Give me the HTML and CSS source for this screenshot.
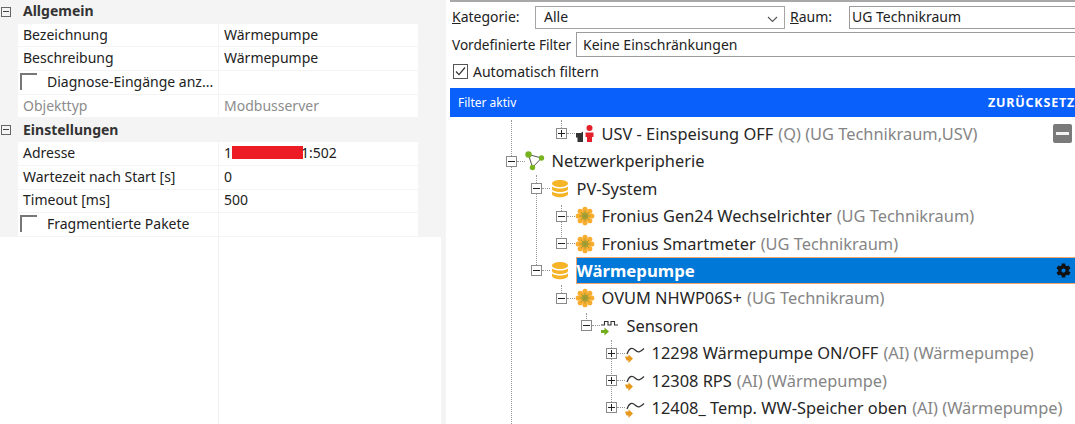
FILE: index.html
```html
<!DOCTYPE html>
<html lang="de">
<head>
<meta charset="utf-8">
<title>Wärmepumpe</title>
<link rel="stylesheet" href="styles.css">
</head>
<body>
<svg class="defs" width="0" height="0" aria-hidden="true">
  <symbol id="ic-db" viewBox="0 0 20 20">
    <path fill="#f6b426" d="M2 4.500C2 2.500 6 1 10 1s8 1.500 8 3.500S14 8 10 8 2 6.500 2 4.500z"/>
    <path fill="#f6b426" d="M2 7.500C4 9 7 9.600 10 9.600s6-.6 8-2.100V10c0 1.600-4 3-8 3s-8-1.400-8-3z"/>
    <path fill="#f6b426" d="M2 12.500C4 14 7 14.600 10 14.600s6-.6 8-2.100V15c0 1.800-4 3.200-8 3.200S2 16.800 2 15z"/>
  </symbol>
  <symbol id="ic-star" viewBox="0 0 22 22">
    <g fill="#f8ad2e">
      <circle cx="11" cy="3.500" r="2.800"/><circle cx="16.300" cy="5.700" r="2.800"/><circle cx="18.500" cy="11" r="2.800"/><circle cx="16.300" cy="16.300" r="2.800"/>
      <circle cx="11" cy="18.500" r="2.800"/><circle cx="5.700" cy="16.300" r="2.800"/><circle cx="3.500" cy="11" r="2.800"/><circle cx="5.700" cy="5.700" r="2.800"/>
      <circle cx="11" cy="11" r="6.500"/>
    </g>
    <circle cx="11" cy="11" r="3.800" fill="#b8a032"/>
    <path stroke="#8f9c35" stroke-width=".8" fill="none" d="M6.500 6.500l9 9M15.500 6.500l-9 9M11 5v12M5 11h12"/>
  </symbol>
  <symbol id="ic-sine" viewBox="0 0 20 20">
    <path fill="none" stroke="#333" stroke-width="1.200" d="M2 11c2-6 5-7 8-4s5 2.500 9-1.500"/>
    <path fill="#e8981d" d="M0 13.500h3.500V11.500L8 15.500l-4.500 4.500v-2.500H1.500z"/>
  </symbol>
</svg>
<div class="app">
  <aside class="left">
    <div class="props">
      <div class="section"><span class="sec-box"></span><span class="sec-title">Allgemein</span></div>
      <div class="prow"><div class="name">Bezeichnung</div><div class="val">Wärmepumpe</div></div>
      <div class="prow"><div class="name">Beschreibung</div><div class="val">Wärmepumpe</div></div>
      <div class="prow"><div class="name name-check"><span class="pcheck"></span>Diagnose-Eingänge anz...</div><div class="val"></div></div>
      <div class="prow muted"><div class="name">Objekttyp</div><div class="val">Modbusserver</div></div>
      <div class="section"><span class="sec-box"></span><span class="sec-title">Einstellungen</span></div>
      <div class="prow"><div class="name">Adresse</div><div class="val">1<span class="redact"></span>1:502</div></div>
      <div class="prow"><div class="name">Wartezeit nach Start [s]</div><div class="val">0</div></div>
      <div class="prow"><div class="name">Timeout [ms]</div><div class="val">500</div></div>
      <div class="prow"><div class="name name-check"><span class="pcheck"></span>Fragmentierte Pakete</div><div class="val"></div></div>
    </div>
    <div class="props-empty"><div class="empty-col"></div></div>
  </aside>
  <main class="right">
    <div class="filters">
      <div class="frow frow-1">
        <label class="lbl lbl-kat"><u>K</u>ategorie:</label>
        <div class="field field-select">Alle
          <svg class="chev" width="11" height="7" viewBox="0 0 11 7"><path d="M1 1l4.500 4.500L10 1" fill="none" stroke="#555" stroke-width="1.100"/></svg>
        </div>
        <label class="lbl lbl-raum"><u>R</u>aum:</label>
        <div class="field field-raum">UG Technikraum</div>
      </div>
      <div class="frow frow-2">
        <label class="lbl lbl-vor">Vordefinierte Filter</label>
        <div class="field field-vor">Keine Einschränkungen</div>
      </div>
      <div class="frow frow-3">
        <svg class="cb" width="15" height="15" viewBox="0 0 15 15"><rect x=".5" y=".5" width="14" height="14" fill="#fff" stroke="#555"/><path d="M3 7.500l3 3.200L12 3.500" fill="none" stroke="#333" stroke-width="1.200"/></svg>
        <span class="lbl lbl-auto">Automatisch filtern</span>
      </div>
    </div>
    <div class="banner"><span>Filter aktiv</span><b>ZURÜCKSETZ</b></div>
    <div class="tree">
      <i class="guide g-root"></i><i class="guide g-pv"></i><i class="guide g-usv"></i><i class="guide g-fro"></i><i class="guide g-ovum"></i><i class="guide g-sens"></i><i class="guide g-ai"></i>
      <div class="row d2"><span class="box plus"></span><span class="dash"></span>
        <svg class="ic" viewBox="0 0 20 20"><path fill="#333" d="M1 9h5l2-1.500V18H2.500V13.500H1z"/><circle cx="14.500" cy="4" r="3" fill="#e4202a"/><path fill="#e4202a" d="M10.500 8.500h8V13h-1.500v5h-5v-5h-1.500z"/></svg>
        <span class="t">USV - Einspeisung OFF</span><span class="g">(Q) (UG Technikraum,USV)</span>
        <span class="minus-btn"></span>
      </div>
      <div class="row d0"><span class="box"></span><span class="dash"></span>
        <svg class="ic" viewBox="0 0 20 20"><path fill="none" stroke="#555" stroke-width="1" d="M3.500 3.500L16.500 7 7.500 16.500z"/><circle cx="3.500" cy="3.500" r="3.200" fill="#78b41e"/><circle cx="16.500" cy="7" r="2.700" fill="#78b41e"/><circle cx="7.500" cy="16.500" r="2.700" fill="#78b41e"/></svg>
        <span class="t">Netzwerkperipherie</span>
      </div>
      <div class="row d1"><span class="box"></span><span class="dash"></span>
        <svg class="ic"><use href="#ic-db"/></svg>
        <span class="t">PV-System</span>
      </div>
      <div class="row d2"><span class="box"></span><span class="dash"></span>
        <svg class="ic"><use href="#ic-star"/></svg>
        <span class="t">Fronius Gen24 Wechselrichter</span><span class="g">(UG Technikraum)</span>
      </div>
      <div class="row d2"><span class="box"></span><span class="dash"></span>
        <svg class="ic"><use href="#ic-star"/></svg>
        <span class="t">Fronius Smartmeter</span><span class="g">(UG Technikraum)</span>
      </div>
      <div class="row d1"><span class="box"></span><span class="dash"></span>
        <svg class="ic"><use href="#ic-db"/></svg>
        <span class="sel"><b class="sel-t">Wärmepumpe</b>
          <svg class="gear" width="17" height="17" viewBox="0 0 24 24"><path fill="#111" d="M19.400 13a7.500 7.500 0 0 0 0-2l2.500-1.900-2.400-4.200-3 1.200a7.500 7.500 0 0 0-1.700-1l-.5-3.100H9.700l-.5 3.100a7.500 7.500 0 0 0-1.700 1l-3-1.200-2.400 4.200L4.600 11a7.500 7.500 0 0 0 0 2l-2.500 1.900 2.400 4.200 3-1.200a7.500 7.500 0 0 0 1.700 1l.5 3.100h4.600l.5-3.100a7.500 7.500 0 0 0 1.700-1l3 1.200 2.400-4.200zM12 15a3 3 0 1 1 0-6 3 3 0 0 1 0 6z"/></svg>
        </span>
      </div>
      <div class="row d2"><span class="box"></span><span class="dash"></span>
        <svg class="ic"><use href="#ic-star"/></svg>
        <span class="t">OVUM NHWP06S+</span><span class="g">(UG Technikraum)</span>
      </div>
      <div class="row d3"><span class="box"></span><span class="dash"></span>
        <svg class="ic" viewBox="0 0 20 20"><path fill="none" stroke="#333" stroke-width="1.100" d="M1 9h3.500V5.500H8V9h3V5.500h3.500V9H18"/><path fill="#72ad1c" d="M1 14h3.500V11.500L9 15.500 4.500 19.500V17H1z"/></svg>
        <span class="t">Sensoren</span>
      </div>
      <div class="row d4"><span class="box plus"></span><span class="dash"></span>
        <svg class="ic"><use href="#ic-sine"/></svg>
        <span class="t">12298 Wärmepumpe ON/OFF</span><span class="g">(AI) (Wärmepumpe)</span>
      </div>
      <div class="row d4"><span class="box plus"></span><span class="dash"></span>
        <svg class="ic"><use href="#ic-sine"/></svg>
        <span class="t">12308 RPS</span><span class="g">(AI) (Wärmepumpe)</span>
      </div>
      <div class="row d4"><span class="box plus"></span><span class="dash"></span>
        <svg class="ic"><use href="#ic-sine"/></svg>
        <span class="t">12408_ Temp. WW-Speicher oben</span><span class="g">(AI) (Wärmepumpe)</span>
      </div>
    </div>
  </main>
</div>
</body>
</html>
```
FILE: styles.css
```css
* { box-sizing: border-box; }
html, body { margin: 0; padding: 0; height: 100%; overflow: hidden; background: #fff; }
body { font-family: "Noto Sans", "Open Sans", sans-serif; color: #222; }
.defs { position: absolute; }

.app { display: flex; width: 1075px; height: 424px; overflow: hidden; }

/* property grid */
.left { width: 446px; flex: none; background: #f4f4f4; display: flex; flex-direction: column; }
.props { width: 418px; font-size: 14px; }
.section { height: 23.700px; display: flex; align-items: center; }
.sec-box { width: 10px; height: 10px; margin-left: 1px; border: 1px solid #666; position: relative; flex: none; }
.sec-box::after { content: ""; position: absolute; left: 1px; right: 1px; top: 3px; height: 1px; background: #444; }
.sec-title { margin-left: 12px; padding-bottom: 2px; font-weight: 700; color: #333; }
.prow { height: 23.700px; display: flex; margin-left: 18px; padding-bottom: 1px; }
.name, .val { background: #fff; display: flex; align-items: center; white-space: nowrap; overflow: hidden; padding-bottom: 2px; }
.name { width: 200px; padding-left: 5px; margin-right: 1px; }
.val { flex: 1; padding-left: 5px; }
.muted .name, .muted .val { color: #8c8c8c; }
.name-check { padding-left: 2px; }
.pcheck { width: 17px; height: 17px; border-left: 2px solid #777; border-top: 2px solid #777; margin-right: 10px; flex: none; }
.redact { display: inline-block; width: 71px; height: 13px; margin-right: -2px; background: #ed1c24; position: relative; z-index: 1; }
.props-empty { width: 441px; flex: 1; background: #fff; }
.empty-col { width: 219px; height: 100%; border-right: 1px solid #f0f0f0; }

/* filters */
.right { flex: 1; min-width: 0; margin-left: 4px; display: flex; flex-direction: column; overflow: hidden; }
.filters { height: 88px; border-top: 2px solid #a8a8a8; margin-left: -3px; padding-left: 5px; font-size: 14px; display: flex; flex-direction: column; }
.frow { display: flex; align-items: center; }
.frow-1 { height: 26px; margin-top: 2px; }
.frow-2 { height: 25px; margin-top: 2px; }
.frow-3 { height: 22px; margin-top: 3px; padding-left: 1px; gap: 5px; }
.lbl { white-space: nowrap; padding-bottom: 2px; }
.lbl-kat { width: 83px; }
.lbl-raum { width: 59px; margin-left: 5px; }
.lbl-vor { width: 124px; font-size: 13.600px; padding-bottom: 0; }
.lbl-auto { padding-bottom: 0; }
.field { height: 100%; border: 1px solid #9c9c9c; background: #fff; display: flex; align-items: center; white-space: nowrap; padding-bottom: 2px; }
.field-select { width: 250px; height: 23px; padding-left: 8px; position: relative; border-color: #a5a5a5; }
.chev { position: absolute; right: 6px; top: 9px; }
.field-raum { flex: 1; height: 23px; padding-left: 2px; margin-right: -5px; }
.field-vor { flex: 1; padding-left: 6px; padding-bottom: 0; margin-right: -5px; }
.cb { flex: none; }

.banner { height: 29px; flex: none; background: #0960fb; color: #fff; display: flex; align-items: center; justify-content: space-between; padding-left: 8px; font-size: 12px; white-space: nowrap; }
.banner b { font-size: 12.500px; letter-spacing: .8px; }

/* tree */
.tree { position: relative; flex: 1; padding-top: 3.300px; font-size: 16.400px; overflow: hidden; }
.row { height: 27.400px; display: flex; align-items: center; white-space: nowrap; }
.d0 { padding-left: 55.500px; }
.d1 { padding-left: 80.500px; }
.d2 { padding-left: 105.500px; }
.d3 { padding-left: 130.500px; }
.d4 { padding-left: 155.500px; }
.box { width: 11px; height: 11px; border: 1px solid #8a8a8a; background: #fff; position: relative; flex: none; z-index: 1; }
.box::before { content: ""; position: absolute; left: 1px; right: 1px; top: 4px; height: 1px; background: #222; }
.plus::after { content: ""; position: absolute; top: 1px; bottom: 1px; left: 4px; width: 1px; background: #222; }
.dash { width: 8px; border-top: 1px dotted #999; flex: none; }
.ic { width: 20px; height: 20px; flex: none; margin-right: 7px; }
.t { color: #262626; padding-bottom: 1px; }
.g { color: #858585; margin-left: 5px; padding-bottom: 1px; }
.sel { flex: 1; height: 27px; margin-left: -1px; background: #0078d7; border: 1px solid #f0a56e; border-right: 0; color: #fff; display: flex; align-items: center; justify-content: space-between; padding-right: 3px; }
.sel-t { font-size: 16.800px; padding-bottom: 1px; }
.gear { flex: none; }
.minus-btn { position: absolute; left: 603px; top: 7px; width: 19px; height: 19px; background: #7a7a7a; border-radius: 2px; }
.minus-btn::after { content: ""; position: absolute; left: 3px; right: 3px; top: 8px; height: 3px; background: #f2f2f2; }
.guide { position: absolute; width: 0; border-left: 1px dotted #999; }
.g-root { left: 61px; top: 3px; height: 304px; }
.g-pv { left: 86px; top: 58px; height: 96px; }
.g-usv { left: 111px; top: 3px; height: 14px; }
.g-fro { left: 111px; top: 88px; height: 38px; }
.g-ovum { left: 111px; top: 168px; height: 14px; }
.g-sens { left: 136px; top: 196px; height: 14px; }
.g-ai { left: 161px; top: 223px; height: 68px; }
```
